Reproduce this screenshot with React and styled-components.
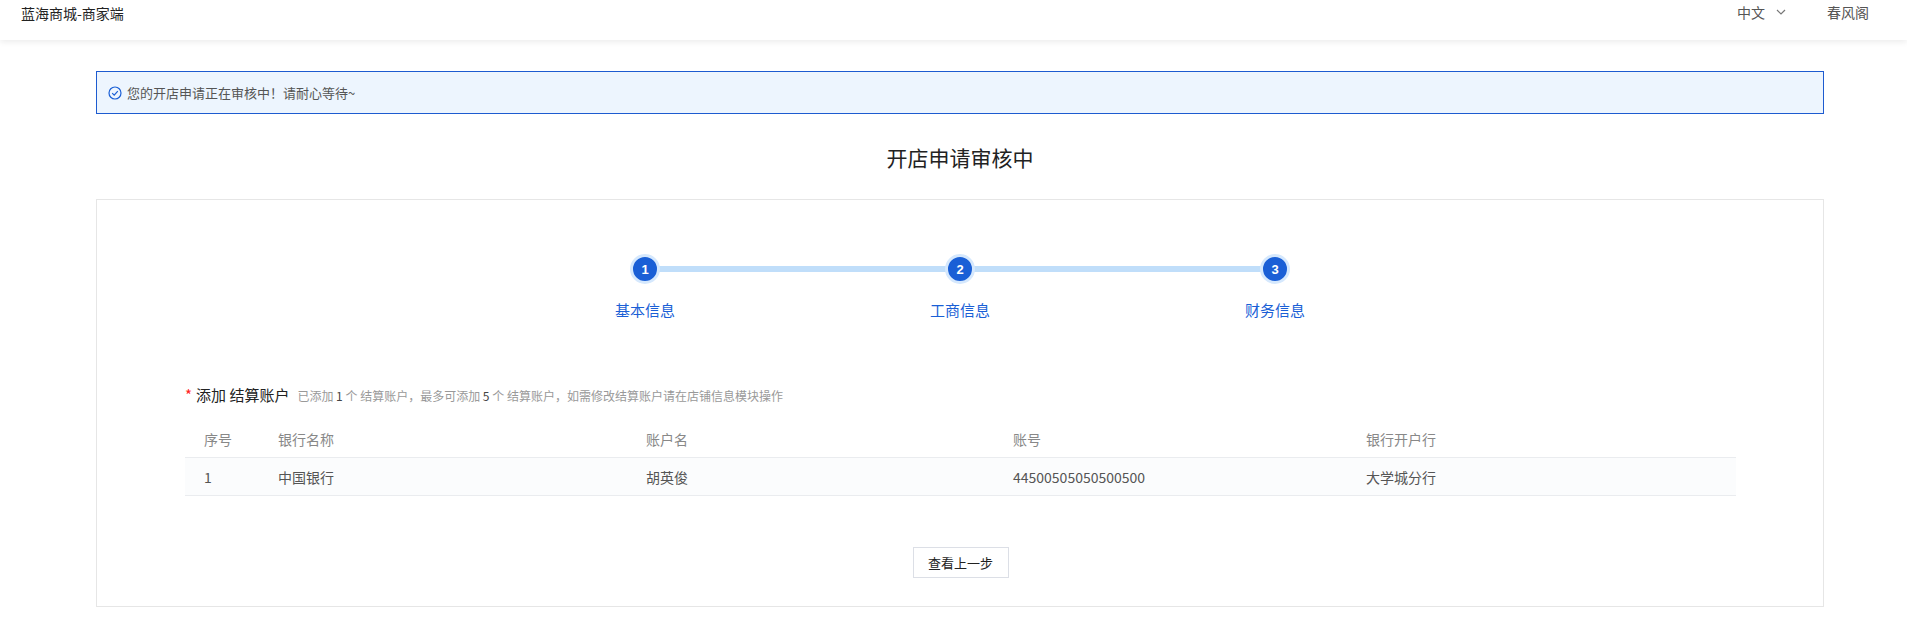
import React from "react";
import styled, { createGlobalStyle } from "styled-components";

const G = createGlobalStyle`
  body{margin:0;background:#fff;font-family:"Noto Sans CJK SC","Liberation Sans",sans-serif;color:#333;}
`;
const Header = styled.div`
  height:40px;display:flex;align-items:flex-start;justify-content:space-between;
  padding:0 38px 0 21px;box-shadow:0 2px 6px rgba(0,0,0,0.08);
`;
const Brand = styled.div`font-size:14px;line-height:26px;color:#222;`;
const Right = styled.div`display:flex;gap:40px;font-size:14px;line-height:24px;color:#555;`;
const Lang = styled.div`display:flex;align-items:center;gap:10px;`;
const Main = styled.div`width:1728px;margin-left:96px;padding-top:31px;`;
const Alert = styled.div`
  height:41px;border:1px solid #1d5bd0;background:#edf5fe;display:flex;align-items:center;
  gap:5px;padding-left:11px;font-size:13px;color:#555;
`;
const Title = styled.div`text-align:center;font-size:21px;color:#222;margin:18px 0 0;line-height:50px;`;
const Card = styled.div`border:1px solid #e6e6e6;margin-top:17px;height:408px;box-sizing:border-box;padding-top:40px;`;
const Steps = styled.div`display:grid;grid-template-columns:repeat(3,315px);justify-content:center;`;
const Step = styled.div`display:flex;flex-direction:column;align-items:center;position:relative;`;
const Line = styled.div`
  position:absolute;top:26px;height:6px;background:#c0defa;left:${p=>p.left?"50%":"0"};right:${p=>p.right?"50%":"0"};
`;
const Dot = styled.div`
  width:24px;height:24px;border-radius:50%;background:#1a5fd6;border:3px solid #d5e8fd;color:#fff;
  font:bold 13px "Liberation Sans",sans-serif;display:flex;align-items:center;justify-content:center;
  position:relative;z-index:1;margin-top:14px;
`;
const StepLabel = styled.div`color:#1a5fd6;font-size:15px;margin-top:15px;`;
const Section = styled.div`padding:0 87px 0 88px;margin-top:64px;`;
const SecHead = styled.div`display:flex;align-items:baseline;gap:8px;`;
const SecTitle = styled.div`font-size:15px;color:#222;span{color:#f22;margin-right:4px;}`;
const SecNote = styled.div`font-size:12px;color:#999;b{color:#444;font-weight:normal;}`;
const Table = styled.div`margin-top:16px;font-size:14px;`;
const Row = styled.div`
  display:grid;grid-template-columns:74px 368px 367px 353px 1fr;height:${p=>p.head?"36px":"37px"};
  align-items:center;border-bottom:1px solid #eaecef;padding-left:19px;
  color:${p=>p.head?"#888":"#555"};background:${p=>p.head?"#fff":"#fbfcfd"};
`;
const Foot = styled.div`display:flex;justify-content:center;margin-top:51px;`;
const Btn = styled.button`
  width:96px;height:31px;border:1px solid #dcdfe6;background:#fff;font-size:13px;color:#222;
  font-family:inherit;
`;

export default function App(){
  return <>
    <G/>
    <Header>
      <Brand>蓝海商城-商家端</Brand>
      <Right>
        <Lang>中文<svg width="12" height="12" viewBox="0 0 12 12"><path d="M2 4l4 4 4-4" fill="none" stroke="#777" strokeWidth="1.2"/></svg></Lang>
        <div>春风阁</div>
      </Right>
    </Header>
    <Main>
      <Alert>
        <svg width="14" height="14" viewBox="0 0 14 14"><circle cx="7" cy="7" r="6" fill="none" stroke="#1a5fd6" strokeWidth="1.2"/><path d="M4.2 7.2l2 2 3.6-4" fill="none" stroke="#1a5fd6" strokeWidth="1.2"/></svg>
        您的开店申请正在审核中！请耐心等待~
      </Alert>
      <Title>开店申请审核中</Title>
      <Card>
        <Steps>
          {["基本信息","工商信息","财务信息"].map((t,i)=>(
            <Step key={t}>
              {i>0 && <Line right/>}
              {i<2 && <Line left/>}
              <Dot>{i+1}</Dot>
              <StepLabel>{t}</StepLabel>
            </Step>
          ))}
        </Steps>
        <Section>
          <SecHead>
            <SecTitle><span>*</span>添加 结算账户</SecTitle>
            <SecNote>已添加 <b>1</b> 个 结算账户，最多可添加 <b>5</b> 个 结算账户，如需修改结算账户请在店铺信息模块操作</SecNote>
          </SecHead>
          <Table>
            <Row head><div>序号</div><div>银行名称</div><div>账户名</div><div>账号</div><div>银行开户行</div></Row>
            <Row><div>1</div><div>中国银行</div><div>胡英俊</div><div>44500505050500500</div><div>大学城分行</div></Row>
          </Table>
          <Foot><Btn>查看上一步</Btn></Foot>
        </Section>
      </Card>
    </Main>
  </>;
}
